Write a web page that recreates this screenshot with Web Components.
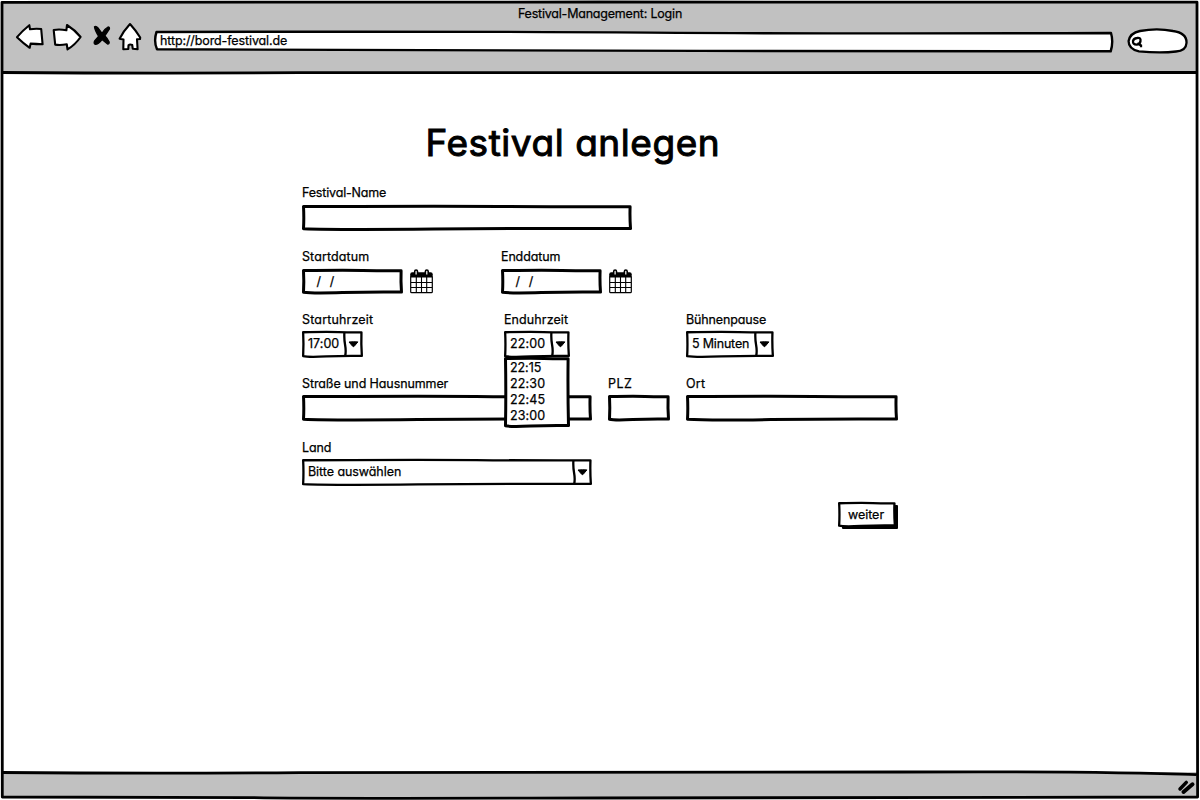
<!DOCTYPE html>
<html lang="de">
<head>
<meta charset="utf-8">
<title>Festival-Management: Login</title>
<style>
html,body{margin:0;height:100%;overflow:hidden;background:#fff}
body{font-family:Inter,"Noto Sans",sans-serif;font-feature-settings:"cv11" 1,"calt" 0;color:#000}
</style>
</head>
<body>
<sketch-browser>
  <sketch-text slot="title" w="164">Festival-Management: Login</sketch-text>
  <sketch-text slot="url" w="127">http://bord-festival.de</sketch-text>
  <festival-form></festival-form>
</sketch-browser>
<script>
// Text fitted to a given advance width through its letter spacing.
class SketchText extends HTMLElement {
  connectedCallback() {
    const size = this.getAttribute('size') || 12.5;
    this.attachShadow({ mode: 'open' }).innerHTML = `<style>
      :host{display:inline-block;white-space:pre;font-size:${size}px;line-height:${size > 20 ? '48px' : '16px'};-webkit-text-stroke:var(--ink,.25px) #000}
    </style><slot></slot>`;
    const w = +this.getAttribute('w');
    requestAnimationFrame(() => this.fit(w));
    this.fit(w);
  }
  fit(w) {
    if (!w) return;
    this.style.letterSpacing = '0px';
    const n = this.textContent.length;
    const gap = (w + .2 - this.getBoundingClientRect().width) / n;
    this.style.letterSpacing = gap + 'px';
  }
}

// Hand-drawn rectangle of w x h with slotted content.
class SketchBox extends HTMLElement {
  connectedCallback() {
    const w = +this.getAttribute('w'), h = +this.getAttribute('h');
    const s = +(this.getAttribute('stroke') || 3), k = s / 2;
    const r = w - k, b = h - k;
    this.attachShadow({ mode: 'open' }).innerHTML = `<style>
      :host{display:flex;position:relative;align-items:center;box-sizing:border-box;flex:none;width:${w}px;height:${h}px}
      svg{position:absolute;inset:0;overflow:visible}
      slot{display:flex;position:relative;align-items:center;width:100%}
    </style>
    <svg width="${w}" height="${h}"><path fill="#fff" stroke="#000" stroke-width="${s}" stroke-linejoin="round"
      d="M${k} ${k + .1}Q${w * .4} ${k - .6} ${w * .6} ${k - .1}T${r - .4} ${k + .2}Q${r - .8} ${h * .5} ${r} ${b - .4}Q${w * .7} ${b - .8} ${w * .4} ${b + .1}T${k} ${b - .2}Q${k + .6} ${h * .5} ${k} ${k}Z"/></svg>
    <slot></slot>`;
  }
}

class SketchField extends HTMLElement {
  connectedCallback() {
    this.attachShadow({ mode: 'open' }).innerHTML = `<style>
      :host{display:grid;grid-template-rows:var(--label-h,22px) auto;justify-items:start;align-content:start;flex:none;width:var(--w,auto)}
      sketch-text{margin-top:2px}
      .control{display:flex;align-items:center;position:relative}
    </style>
    <sketch-text w="${this.getAttribute('lw')}">${this.getAttribute('label')}</sketch-text>
    <div class="control"><slot></slot></div>`;
  }
}

class SketchSelect extends HTMLElement {
  connectedCallback() {
    const w = +this.getAttribute('w');
    this.attachShadow({ mode: 'open' }).innerHTML = `<style>
      :host{display:block;position:relative}
      .value{flex:1;padding:0 0 0 6px;display:flex}
      svg{flex:none;display:block}
      .menu{position:absolute;left:0;top:26px;z-index:2}
    </style>
    <sketch-box w="${w}" h="26.5" stroke="2.3">
      <div class="value"><sketch-text w="${this.getAttribute('tw')}">${this.getAttribute('value')}</sketch-text></div>
      <svg width="20" height="26" viewBox="0 0 20 26">
        <path d="M1.4 1.5Q1 8 2.1 14T2.2 25" fill="none" stroke="#000" stroke-width="2.3"/>
        <path d="M6 11Q10.5 10.5 14.9 10.9L11.2 15.3Q10.4 16 9.6 15.2Z" stroke="#000" stroke-width="1" stroke-linejoin="round"/>
      </svg>
    </sketch-box>
    <div class="menu"><slot></slot></div>`;
  }
}

class SketchOptions extends HTMLElement {
  connectedCallback() {
    const rows = this.getAttribute('items').split(',').map(t => `<sketch-text w="${t === '22:15' ? 31 : 35}">${t}</sketch-text>`).join('');
    this.attachShadow({ mode: 'open' }).innerHTML = `<style>
      :host{display:block}
      .list{display:grid;grid-auto-rows:16px;padding:0 0 0 6px;align-items:center;justify-items:start}
    </style><sketch-box w="66" h="70.5"><div class="list">${rows}</div></sketch-box>`;
  }
}

class SketchCalendar extends HTMLElement {
  connectedCallback() {
    this.attachShadow({ mode: 'open' }).innerHTML = `<style>:host{display:block;margin-left:7px;height:25px}svg{display:block}</style>
    <svg width="23" height="25" viewBox="0 0 23 25">
      <path d="M.2 8.3V5.2Q.2 3.2 2.2 3.2H20.7Q22.7 3.2 22.7 5.2V8.3Z"/>
      <path d="M.7 8V22.8Q.7 23.7 1.6 23.7H21.4Q22.3 23.7 22.3 22.8V8Z" fill="#fff" stroke="#000" stroke-width="1.2"/>
      <path d="M6.3 8V23M11.5 8V23M16.7 8V23M1 13.5H22M1 18.5H22" fill="none" stroke="#000" stroke-width="1.1"/>
      <path d="M4.7 6.3V2.6Q4.7 1 6.1 1T7.5 2.6V6.3ZM15.4 6.3V2.6Q15.4 1 16.8 1T18.2 2.6V6.3Z" fill="#fff" stroke="#000" stroke-width="1.6"/>
    </svg>`;
  }
}

class SketchButton extends HTMLElement {
  connectedCallback() {
    this.attachShadow({ mode: 'open' }).innerHTML = `<style>
      :host{display:block;position:relative;width:60px;height:27px}
      .shadow{position:absolute;left:4px;top:3px;width:56px;height:23.5px;background:#000;border-radius:1px}
      .label{width:100%;display:flex;justify-content:center;padding-right:2px}
    </style><div class="shadow"></div>
    <sketch-box w="58" h="25" stroke="2.3"><div class="label"><slot></slot></div></sketch-box>`;
  }
}

class FestivalForm extends HTMLElement {
  connectedCallback() {
    const date = `<sketch-box w="101" h="25"><sketch-text w="18" style="margin-left:14.5px;margin-top:1px">/  /</sketch-text></sketch-box><sketch-calendar></sketch-calendar>`;
    this.attachShadow({ mode: 'open' }).innerHTML = `<style>
      :host{display:grid;width:596px;margin-left:302px;padding-top:47px;
        grid-template-rows:64px 64px 63px 64px 64px 64px 27px;align-content:start}
      h1{margin:0 0 0 123.5px;font-weight:400;height:64px;display:flex;align-items:flex-start;--ink:1px}
      .row{display:flex;align-items:flex-start}
      .low{--label-h:21px}
      .end{justify-content:flex-end}
    </style>
    <h1><sketch-text size="37" w="294.5">Festival anlegen</sketch-text></h1>
    <div class="row"><sketch-field label="Festival-Name" lw="84"><sketch-box w="330" h="25.5"></sketch-box></sketch-field></div>
    <div class="row">
      <sketch-field label="Startdatum" lw="67" style="--w:199px">${date}</sketch-field>
      <sketch-field label="Enddatum" lw="59">${date}</sketch-field>
    </div>
    <div class="row low">
      <sketch-field label="Startuhrzeit" lw="71" style="--w:202px"><sketch-select w="61" tw="31" value="17:00"></sketch-select></sketch-field>
      <sketch-field label="Enduhrzeit" lw="64" style="--w:182px"><sketch-select w="66" tw="35" value="22:00"><sketch-options items="22:15,22:30,22:45,23:00"></sketch-options></sketch-select></sketch-field>
      <sketch-field label="Bühnenpause" lw="80"><sketch-select w="88" tw="57" value="5 Minuten"></sketch-select></sketch-field>
    </div>
    <div class="row low">
      <sketch-field label="Straße und Hausnummer" lw="146" style="--w:306px"><sketch-box w="290" h="26"></sketch-box></sketch-field>
      <sketch-field label="PLZ" lw="24" style="--w:78px"><sketch-box w="62" h="26"></sketch-box></sketch-field>
      <sketch-field label="Ort" lw="19"><sketch-box w="212" h="26"></sketch-box></sketch-field>
    </div>
    <div class="row low"><sketch-field label="Land" lw="29"><sketch-select w="290" tw="93" value="Bitte auswählen"></sketch-select></sketch-field></div>
    <div class="row end"><sketch-button><sketch-text w="36">weiter</sketch-text></sketch-button></div>`;
  }
}

class SketchBrowser extends HTMLElement {
  connectedCallback() {
    this.attachShadow({ mode: 'open' }).innerHTML = `<style>
      :host{display:grid;position:relative;width:1200px;height:800px;grid-template-rows:72px 1fr 28px;background:#fff}
      header,footer{background:#c1c1c1;margin:0 3px}
      header{margin-top:2px;height:70px;display:grid;grid-template-rows:24px 28px}
      footer{display:flex;justify-content:flex-end;margin-bottom:3px}
      footer svg{margin:6px 0 0}
      .title{display:flex;justify-content:center;align-items:center;height:23px}
      .bar{display:flex;align-items:flex-start}
      .nav{width:151px;flex:none;margin-top:-4px}
      .url{display:grid;align-items:center;width:959px;height:22px;margin-top:4px;position:relative}
      .url svg{position:absolute;inset:0;overflow:visible}
      .url slot{display:block;position:relative;padding:0 0 1px 6px;line-height:16px;font-size:12.5px}
      .search{margin:2px 0 0 14px}
      svg{display:block}
      .frame{position:absolute;inset:0;pointer-events:none}
    </style>
    <header>
      <div class="title"><slot name="title"></slot></div>
      <div class="bar">
        <svg class="nav" width="151" height="30" viewBox="3 22 151 30" fill="#fff" stroke="#000" stroke-width="2.1" stroke-linejoin="round">
          <path d="M17 37.2Q22 31 29.3 25.2L30 29.2Q36 28.3 41.2 29L42.6 44.3Q36 44 30.6 43.6L29.7 47.8Q23 43 17 37.2Z"/>
          <path d="M53.7 30Q59 28.8 66.4 30.2L67 25Q75 30 80.6 37Q75 45 67.5 49.4L66.8 44.3Q60 45.5 55.2 44.6Z"/>
          <path d="M94.5 26.8Q96 25.6 98 28L102 33.3Q105 28.4 108 27Q110 27 109.3 29.2L104.8 35.8Q107.8 39 109.2 42Q109.3 44.2 107.6 44L102 39.5Q98.5 44.3 95.3 44.3Q93.4 43.5 94.6 41L98.7 36.3Q95 30.5 94.5 26.8Z" fill="#000" stroke-width="1.3"/>
          <path d="M130 24Q135.5 30 140.2 37.5L140 39L137 39.2L137.6 49.3L132.8 48.8L132.2 45Q130 43.8 128.5 45.2L128.3 49L123.3 49.3L123.5 39.5L119.6 38.8Q123.5 31 130 24Z"/>
        </svg>
        <div class="url">
          <svg width="959" height="22" viewBox="154 30 959 22"><path d="M156.5 32Q450 31.2 650 32.6T1111 33Q1113.6 42 1110.7 51.3Q900 51.8 700 50.9T157 49.3Q153.5 41 156.5 32Z" fill="#fff" stroke="#000" stroke-width="2.4" stroke-linejoin="round"/></svg>
          <slot name="url"></slot>
        </div>
        <svg class="search" width="62" height="28" viewBox="1127 28 62 28" fill="none" stroke="#000" stroke-width="2.3">
          <path d="M1140 31Q1157 27.8 1173 31Q1187 33 1186.5 43Q1186 51 1176 51.5Q1160 53.5 1139 51.3Q1128.5 49 1128.6 41Q1130 33 1140 31Z" fill="#fff"/>
          <path d="M1137 38Q1141 37.4 1140.5 41Q1140 44.5 1136.7 44.6Q1132.6 44.4 1133 41Q1133.5 38.4 1137 38ZM1137.3 43.2L1141 45.5V47.3"/>
        </svg>
      </div>
    </header>
    <slot></slot>
    <footer><svg width="20" height="18" viewBox="1177 778 20 18" stroke="#000" stroke-linecap="round" fill="none"><path d="M1180 789L1186.3 782.4" stroke-width="3.5"/><path d="M1183.5 792L1192.5 784.3" stroke-width="4"/></svg></footer>
    <svg class="frame" width="1200" height="800" fill="none" stroke="#000" stroke-width="2.8" stroke-linejoin="round">
      <path d="M2 2.3Q350 1.6 600 2T1197 2.2Q1196.8 300 1197.2 500L1197.6 797Q900 797.2 600 798T250 797.6L2.3 797Q3 450 2 250Z"/>
      <path d="M2 72.5Q150 73.5 300 72.7T900 72.5L1197 72.5"/>
      <path d="M1130 772Q1165 772.5 1197 774.5V776L1130 773Z" fill="#fff" stroke="none"/>
      <path d="M2 772.5Q150 773.8 300 772.6T900 772Q1100 771 1197 774.7"/>
    </svg>`;
  }
}

customElements.define('sketch-text', SketchText);
customElements.define('sketch-box', SketchBox);
customElements.define('sketch-field', SketchField);
customElements.define('sketch-options', SketchOptions);
customElements.define('sketch-select', SketchSelect);
customElements.define('sketch-calendar', SketchCalendar);
customElements.define('sketch-button', SketchButton);
customElements.define('festival-form', FestivalForm);
customElements.define('sketch-browser', SketchBrowser);
</script>
</body>
</html>
